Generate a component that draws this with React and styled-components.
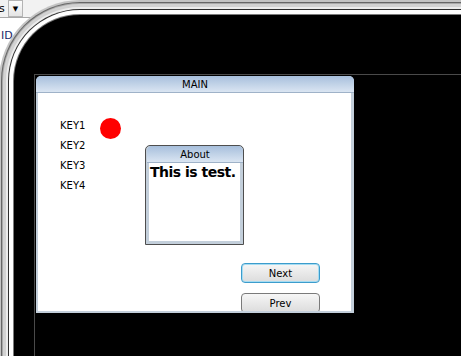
import styled, { createGlobalStyle } from "styled-components";

const GlobalStyle = createGlobalStyle`
  html, body {
    margin: 0;
    padding: 0;
    background: #ffffff;
  }
  body {
    font-family: "DejaVu Sans", "Liberation Sans", sans-serif;
  }
`;

const Page = styled.div`
  position: relative;
  width: 461px;
  height: 356px;
  overflow: hidden;
  background: #ffffff;
`;

/* bits of the host app peeking out behind the device skin */
const Toolbar = styled.div`
  display: flex;
  align-items: center;
  height: 17px;
  background: #f2f2f2;
  border-bottom: 1px solid #a8a8a8;
  font-size: 11px;
  color: #000;
`;

const ComboText = styled.span`
  margin-left: -1px;
  width: 9px;
`;

const DropButton = styled.span`
  display: flex;
  align-items: center;
  justify-content: center;
  width: 13px;
  height: 15px;
  border: 1px solid #b4b4b4;
  background: linear-gradient(#fdfdfd, #e4e4e4);
  font-size: 7px;
`;

const HostLabel = styled.div`
  margin: 11px 0 0 1px;
  font-size: 11px;
  color: #1a2a6a;
`;

const Device = styled.div`
  position: absolute;
  left: 14px;
  top: 15px;
  width: 520px;
  height: 420px;
  background: #000;
  border-radius: 66px 0 0 0;
  box-shadow: 0 0 0 1px #7c7c7c, 0 0 0 5px #ffffff, 0 0 0 6px #2e2e2e,
    0 0 0 8px #ececec, 0 0 0 11px #d2d2d2, 0 0 0 12px #a8a8a8,
    0 0 0 13px #666666, 0 0 0 15px #c4c4c4;
`;

const Stage = styled.div`
  margin: 59px 0 0 20px;
  padding: 1px;
  height: 400px;
  border-top: 1px solid #4a4a4a;
  border-left: 1px solid #4a4a4a;
`;

const Window = styled.div`
  display: flex;
  flex-direction: column;
  width: 318px;
  height: 237px;
  box-sizing: border-box;
  padding: 0 3px 2px 2px;
  background: #c3cfdb;
  border-radius: 5px 5px 0 0;
  border: ${(p) => (p.$outlined ? "1px solid #4e4e4e" : "none")};
`;

const TitleBar = styled.div`
  display: flex;
  align-items: center;
  justify-content: center;
  height: 17px;
  margin: 0 -3px 0 -2px;
  flex-shrink: 0;
  border-radius: 5px 5px 0 0;
  background: linear-gradient(#a7bfdc, #dae5f2);
  border-bottom: 1px solid #9fb2c8;
  box-sizing: border-box;
  font-size: 10px;
  color: #000;
`;

const Body = styled.div`
  flex: 1;
  display: flex;
  flex-direction: column;
  background: #ffffff;
  overflow: hidden;
`;

const TopRow = styled.div`
  display: flex;
  align-items: flex-start;
  padding-top: 23px;
`;

const KeyList = styled.div`
  display: flex;
  flex-direction: column;
  width: 40px;
  margin-left: 22px;
`;

const Key = styled.div`
  height: 20px;
  line-height: 20px;
  font-size: 10px;
  color: #000;
`;

const Dot = styled.div`
  width: 21px;
  height: 21px;
  margin-top: 2px;
  border-radius: 50%;
  background: #ff0000;
`;

const AboutBox = styled(Window)`
  width: 99px;
  height: 100px;
  margin: 29px 0 0 24px;
  padding: 0 3px 3px 3px;
`;

const Message = styled.div`
  padding: 1px 0 0 1px;
  font-size: 14px;
  font-weight: bold;
  letter-spacing: -0.5px;
  white-space: nowrap;
  color: #000;
`;

const ButtonColumn = styled.div`
  display: flex;
  flex-direction: column;
  gap: 10px;
  align-self: flex-end;
  margin: 18px 31px 0 0;
`;

const Button = styled.button`
  width: 79px;
  height: 20px;
  flex-shrink: 0;
  padding: 0;
  border-radius: 4px;
  border: 1px solid ${(p) => (p.$focused ? "#3c9ccc" : "#7a7a7a")};
  box-shadow: ${(p) => (p.$focused ? "inset 0 0 0 1px #a6dcf2" : "none")};
  background: linear-gradient(#f6f6f6, #dcdcdc);
  font-family: "DejaVu Sans", sans-serif;
  font-size: 10px;
  color: #000;
`;

export default function App() {
  return (
    <>
      <GlobalStyle />
      <Page>
        <Toolbar>
          <ComboText>s</ComboText>
          <DropButton>▼</DropButton>
        </Toolbar>
        <HostLabel>ID</HostLabel>
        <Device>
          <Stage>
            <Window>
              <TitleBar>MAIN</TitleBar>
              <Body>
                <TopRow>
                  <KeyList>
                    <Key>KEY1</Key>
                    <Key>KEY2</Key>
                    <Key>KEY3</Key>
                    <Key>KEY4</Key>
                  </KeyList>
                  <Dot />
                  <AboutBox $outlined>
                    <TitleBar>About</TitleBar>
                    <Body>
                      <Message>This is test.</Message>
                    </Body>
                  </AboutBox>
                </TopRow>
                <ButtonColumn>
                  <Button $focused>Next</Button>
                  <Button>Prev</Button>
                </ButtonColumn>
              </Body>
            </Window>
          </Stage>
        </Device>
      </Page>
    </>
  );
}
